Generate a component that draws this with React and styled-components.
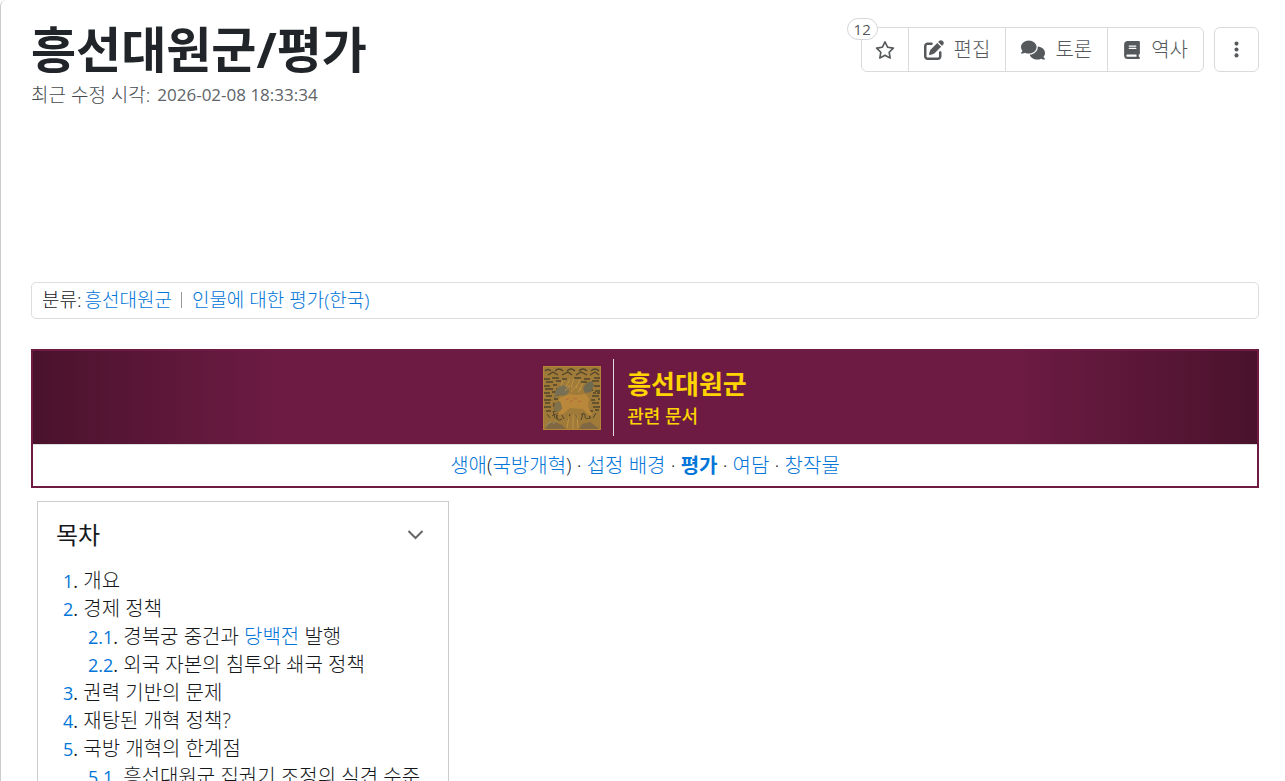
import React from 'react';
import styled, { createGlobalStyle } from 'styled-components';
import { FaRegStar, FaPenToSquare, FaComments, FaBook, FaEllipsisVertical } from 'react-icons/fa6';

const GlobalStyle = createGlobalStyle`
  *, *::before, *::after { box-sizing: border-box; }
  body {
    margin: 0;
    background: #fff;
    color: #15181b;
    font-family: "Open Sans", "Noto Sans CJK KR", sans-serif;
    font-size: 20px;
    font-weight: 300;
    line-height: 28px;
  }
  a { color: #0275d8; text-decoration: none; }
  a:hover { text-decoration: underline; }
`;

const Article = styled.article`
  height: 100vh;
  overflow: hidden;
  padding: 18px 26px 0 30px;
  border-left: 1px solid #ccc;
  border-top-left-radius: 6px;
`;

const Header = styled.header`
  display: flex;
  justify-content: space-between;
  align-items: flex-start;
`;

const Title = styled.h1`
  margin: 0;
  color: #212529;
  font-size: 49px;
  font-weight: 700;
  line-height: 62px;
`;

const Modified = styled.p`
  display: flex;
  gap: 7px;
  margin: 1px 0 0;
  color: #45494d;
  font-size: 19px;
  time { color: #606468; font-size: 17px; font-weight: 400; }
`;

const Tools = styled.div`
  display: flex;
  gap: 10px;
  padding-top: 9px;
`;

const ButtonGroup = styled.div`
  display: flex;
  position: relative;
  border: 1px solid #d8dadc;
  border-radius: 6px;
`;

const ToolButton = styled.button`
  display: flex;
  align-items: center;
  gap: 10px;
  height: ${(p) => (p.$single ? '45px' : '43px')};
  padding: 0 ${(p) => (p.$single ? '12px' : p.$icon ? '13px' : '15px')};
  border: ${(p) => (p.$single ? '1px solid #d8dadc' : '0')};
  border-radius: ${(p) => (p.$single ? '6px' : '0')};
  background: transparent;
  color: #55595c;
  font: inherit;
  white-space: nowrap;
  & + & { border-left: 1px solid #d8dadc; }
  svg { flex: none; }
`;

const StarCount = styled.span`
  position: absolute;
  top: -10px;
  left: -15px;
  padding: 0 6px;
  border: 1px solid #d4d7dc;
  border-radius: 11px;
  background: #fff;
  color: #55595c;
  font-size: 15px;
  font-weight: 400;
  line-height: 20px;
`;

const Categories = styled.nav`
  display: flex;
  align-items: center;
  gap: 3px;
  margin-top: 173px;
  height: 37px;
  padding: 0 10px 2px;
  border: 1px solid #ddd;
  border-radius: 5px;
  font-size: 19px;
  ul { display: flex; margin: 0; padding: 0; list-style: none; }
  li + li { display: flex; align-items: center; }
  li + li::before {
    content: "";
    height: 16px;
    margin: 0 10px 0 9px;
    border-left: 1px solid #999;
  }
`;

const Related = styled.section`
  margin-top: 30px;
  border: 2px solid #6d1b43;
`;

const Banner = styled.div`
  display: flex;
  justify-content: center;
  align-items: center;
  height: 93px;
  background: linear-gradient(to right, #4a122d, #6d1b43 20%, #6d1b43 80%, #4a122d);
`;

const BannerText = styled.div`
  display: flex;
  flex-direction: column;
  justify-content: center;
  height: 77px;
  margin-left: 12px;
  padding-left: 13px;
  border-left: 1px solid #ddd;
  color: #ffd400;
  strong { font-size: 26px; font-weight: 700; line-height: 36px; }
  span { font-size: 18px; font-weight: 500; line-height: 28px; }
`;

const RelatedLinks = styled.nav`
  height: 42px;
  border-top: 1px solid #ddd;
  line-height: 41px;
  text-align: center;
  a[aria-current] { font-weight: 700; }
`;

const Toc = styled.nav`
  width: fit-content;
  margin: 13px 0 0 6px;
  padding: 17px 24px 18px 18px;
  border: 1px solid #ccc;
`;

const TocTitle = styled.button`
  display: flex;
  justify-content: space-between;
  align-items: center;
  width: 100%;
  margin-bottom: 16px;
  padding: 0;
  border: 0;
  background: none;
  color: inherit;
  font: inherit;
  font-size: 24px;
  font-weight: 400;
  line-height: 32px;
`;

const TocList = styled.ol`
  margin: 0;
  padding-left: ${(p) => (p.$nested ? '25px' : '7px')};
  padding-right: ${(p) => (p.$nested ? '0' : '4px')};
  list-style: none;
`;

const TocNumber = styled.span`
  font-size: 18px;
  font-weight: 400;
  line-height: 20px;
`;

const Emblem = () => (
  <svg width="58" height="64" viewBox="0 0 58 64" role="img" aria-label="흥선대원군 흉배">
    <rect width="58" height="64" fill="#a07a39" />
    <g fill="none" stroke="#50452b" strokeWidth="1.3">
      <path d="M2 5q3-3 6 0m4 0q4-4 8 0m4 0q4-4 8 0m4 0q4-4 8 0m4 0q4-4 8 0M5 9l5-3 5 3m4 0l6-3 4 3m4 0l5-3 6 3m3 0l5-3 4 3" />
      <path d="M1 13h6m2-1h7m3 1h5m7-1h7m3 1h6m4-1h6M3 16h7m3-1h5m20 1h6m5-1h7M1 20h6m3-1h4m37 1h6M2 23h8m3 0h3m30 1h4m2 1h5M1 27h6m2-1h5m36 1h3m1 0h4M3 30h6m3-1h4m33 1h7M1 34h7m3-1h4m33 1h4m3-1h3M2 37h5m3 1h5m34-1h7M1 41h7m2-1h4m36 1h7M3 45h5m3 0h3m31 0h5m2-1h4" />
      <path d="M4 48l3 4m3-7l2 7m3-5l-2 6m6-4l2 4m6-5l-2 6m8-5l2 5m5-6l-2 6m8-7l1 6m6-6l-3 5M9 50q5-4 5 1t5 2m19-4q4-4 4 1t6 1" strokeWidth="1" />
    </g>
    <path d="M14 22l5-3 6 2 1 5-4 4-6-1-5 3 1-5z" fill="#777054" />
    <path d="M40 23q2-7 9-8l2 4-3 7-6 1z" fill="#6f6b51" />
    <path d="M12 37l6-3 7 3-4 5-7 4-4-2z" fill="#817149" />
    <path d="M18 31l8-3 7 1 10-1 3 5-1 8 4 7-2 2-7-7-13-1-7 6-6 1 5-6-1-6-3-3z" fill="#b9883a" />
    <g stroke="#bd9344" fill="none">
      <path d="M18 20l2-6m3 7l4-8m1 9l3-10m2 10l4-9m-1 11l4-7M22 25l5-6M28 26l6-7m1 7l4-4" />
      <path d="M26 50l-2 12m6-13v14m4-14l1 13" />
    </g>
    <path d="M23 34l3-2m4 0l4 1m-7 3l3-2m5 2l3-1" stroke="#b8643a" fill="none" />
    <path d="M2 63l3-5 7-2 7 3 4 4zM36 63l3-5 8-2 8 6v1z" fill="#806844" />
    <path d="M3 60l5-5m2 3l3-3" stroke="#929273" fill="none" />
    <rect x=".5" y=".5" width="57" height="63" fill="none" stroke="#b18438" />
  </svg>
);

const Chevron = () => (
  <svg width="17" height="12" viewBox="0 0 17 12" fill="none" stroke="#666" strokeWidth="2" aria-hidden="true">
    <path d="M1.5 2l7 7 7-7" />
  </svg>
);

const Entry = ({ n, children }) => (
  <>
    <TocNumber><a href={`#s-${n}`}>{n}</a>.</TocNumber> {children}
  </>
);

export default function App() {
  return (
    <>
      <GlobalStyle />
      <Article>
        <Header>
          <div>
            <Title>흥선대원군/평가</Title>
            <Modified><span>최근 수정 시각:</span><time>2026-02-08 18:33:34</time></Modified>
          </div>
          <Tools>
            <ButtonGroup>
              <ToolButton $icon aria-label="즐겨찾기"><FaRegStar size={20} /></ToolButton>
              <ToolButton><FaPenToSquare size={20} />편집</ToolButton>
              <ToolButton><FaComments size={24} />토론</ToolButton>
              <ToolButton><FaBook size={18} />역사</ToolButton>
              <StarCount>12</StarCount>
            </ButtonGroup>
            <ToolButton $single aria-label="더 보기"><FaEllipsisVertical size={19} /></ToolButton>
          </Tools>
        </Header>

        <Categories>
          <span>분류:</span>
          <ul>
            <li><a href="#cat-1">흥선대원군</a></li>
            <li><a href="#cat-2">인물에 대한 평가(한국)</a></li>
          </ul>
        </Categories>

        <Related>
          <Banner>
            <Emblem />
            <BannerText>
              <strong>흥선대원군</strong>
              <span>관련 문서</span>
            </BannerText>
          </Banner>
          <RelatedLinks>
            <a href="#life">생애</a>(<a href="#defense">국방개혁</a>) · <a href="#regency">섭정 배경</a> · <a href="#review" aria-current="page">평가</a> · <a href="#trivia">여담</a> · <a href="#works">창작물</a>
          </RelatedLinks>
        </Related>

        <Toc aria-label="목차">
          <TocTitle aria-expanded="true">목차<Chevron /></TocTitle>
          <TocList>
            <li><Entry n="1">개요</Entry></li>
            <li>
              <Entry n="2">경제 정책</Entry>
              <TocList $nested>
                <li><Entry n="2.1">경복궁 중건과 <a href="#coin">당백전</a> 발행</Entry></li>
                <li><Entry n="2.2">외국 자본의 침투와 쇄국 정책</Entry></li>
              </TocList>
            </li>
            <li><Entry n="3">권력 기반의 문제</Entry></li>
            <li><Entry n="4">재탕된 개혁 정책?</Entry></li>
            <li>
              <Entry n="5">국방 개혁의 한계점</Entry>
              <TocList $nested>
                <li><Entry n="5.1">흥선대원군 집권기 조정의 식견 수준</Entry></li>
              </TocList>
            </li>
          </TocList>
        </Toc>
      </Article>
    </>
  );
}
